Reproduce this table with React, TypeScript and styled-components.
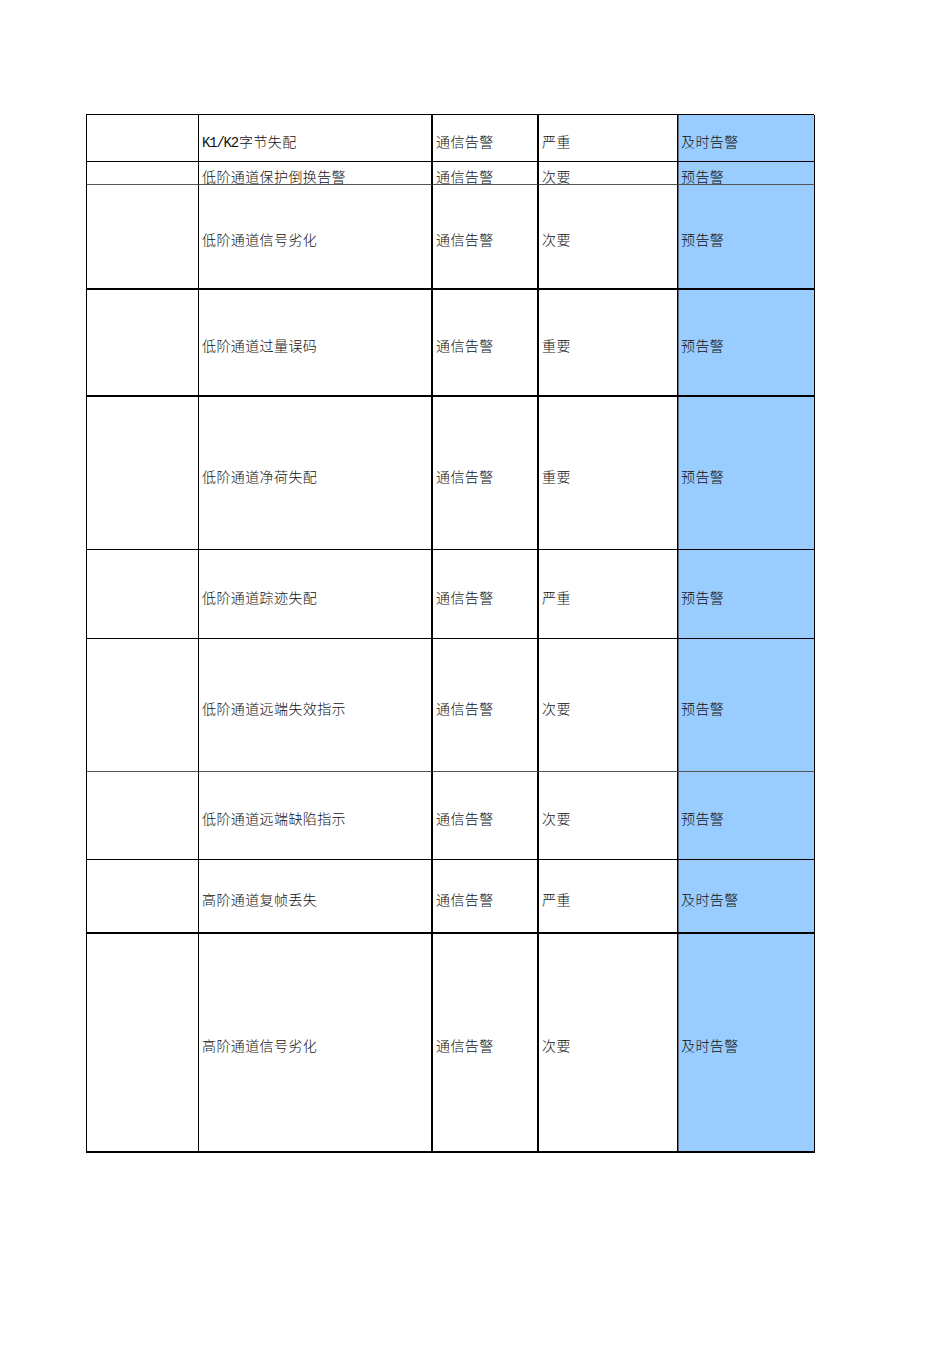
import React from "react";
import styled, { createGlobalStyle } from "styled-components";

const GlobalStyle = createGlobalStyle`
  html, body {
    margin: 0;
    padding: 0;
    background: #fff;
  }
  body {
    font-family: "Liberation Serif", "Noto Sans CJK SC", serif;
    color: #111;
  }
`;

const Page = styled.div`
  width: 950px;
  min-height: 1345px;
  padding: 114px 0 0 86px;
  box-sizing: border-box;
`;

const Sheet = styled.div`
  display: grid;
  grid-template-columns: 112px 234px 106px 139px 137px;
  width: 728px;
  border-top: 1px solid #000;
  border-left: 1px solid #000;
  box-sizing: border-box;
`;

const Cell = styled.div<{ $h: number; $blue?: boolean; $thickRight?: boolean; $bottom?: string; $leftGray?: boolean }>`
  height: ${(p) => p.$h}px;
  box-sizing: border-box;
  display: flex;
  align-items: center;
  padding: 9px 0 0 3px;
  font-size: 14px;
  line-height: 14px;
  font-weight: 300;
  letter-spacing: 0.4px;
  white-space: nowrap;
  overflow: visible;
  background: ${(p) => (p.$blue ? "#99ccff" : "#fff")};
  border-right: ${(p) => (p.$thickRight ? "2px" : "1px")} solid #000;
  border-bottom: ${(p) => p.$bottom ?? "1px solid #000"};
  box-shadow: ${(p) => (p.$leftGray ? "inset 1px 0 0 #5c6b80" : "none")};
`;

// half-width latin, like the sheet's song-style font
const Latin = styled.span`
  font-family: "Liberation Mono", monospace;
  font-size: 14px;
  letter-spacing: -1.2px;
  margin-right: 1px;
`;

interface Row {
  h: number;
  name: React.ReactNode;
  type: string;
  level: string;
  action: string;
  bottom?: string;
}

const rows: Row[] = [
  { h: 47, name: <><Latin>K1/K2</Latin>字节失配</>, type: "通信告警", level: "严重", action: "及时告警" },
  { h: 23, name: "低阶通道保护倒换告警", type: "通信告警", level: "次要", action: "预告警", bottom: "1px solid #555" },
  { h: 105, name: "低阶通道信号劣化", type: "通信告警", level: "次要", action: "预告警", bottom: "2px solid #000" },
  { h: 107, name: "低阶通道过量误码", type: "通信告警", level: "重要", action: "预告警", bottom: "2px solid #000" },
  { h: 153, name: "低阶通道净荷失配", type: "通信告警", level: "重要", action: "预告警" },
  { h: 89, name: "低阶通道踪迹失配", type: "通信告警", level: "严重", action: "预告警" },
  { h: 133, name: "低阶通道远端失效指示", type: "通信告警", level: "次要", action: "预告警", bottom: "1px solid #555" },
  { h: 88, name: "低阶通道远端缺陷指示", type: "通信告警", level: "次要", action: "预告警" },
  { h: 74, name: "高阶通道复帧丢失", type: "通信告警", level: "严重", action: "及时告警", bottom: "2px solid #000" },
  { h: 219, name: "高阶通道信号劣化", type: "通信告警", level: "次要", action: "及时告警", bottom: "2px solid #000" },
];

export default function App() {
  return (
    <>
      <GlobalStyle />
      <Page>
        <Sheet>
          {rows.map((r, i) => (
            <React.Fragment key={i}>
              <Cell $h={r.h} $bottom={r.bottom} />
              <Cell $h={r.h} $bottom={r.bottom} $thickRight>
                {r.name}
              </Cell>
              <Cell $h={r.h} $bottom={r.bottom} $thickRight>
                {r.type}
              </Cell>
              <Cell $h={r.h} $bottom={r.bottom}>
                {r.level}
              </Cell>
              <Cell $h={r.h} $bottom={r.bottom} $blue $leftGray>
                {r.action}
              </Cell>
            </React.Fragment>
          ))}
        </Sheet>
      </Page>
    </>
  );
}
